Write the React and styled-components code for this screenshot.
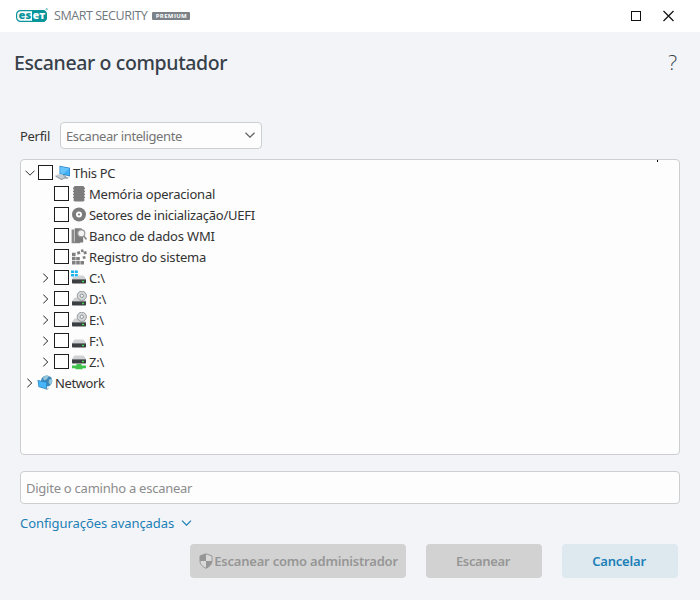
import React from "react";
import styled, { createGlobalStyle } from "styled-components";

const GlobalStyle = createGlobalStyle`
  * {
    box-sizing: border-box;
  }
  body {
    margin: 0;
    font-family: "Noto Sans", "Open Sans", sans-serif;
    font-size: 13px;
    color: #333;
  }
`;

const Window = styled.div`
  width: 700px;
  height: 600px;
  background: #f3f4f7;
  overflow: hidden;
`;

const TitleBar = styled.header`
  display: flex;
  align-items: center;
  height: 32px;
  padding: 0 25px 0 15px;
  background: #fff;
`;

const ProductName = styled.span`
  margin-left: 6px;
  font-family: "Open Sans", sans-serif;
  font-size: 12.5px;
  line-height: 32px;
  letter-spacing: -0.45px;
  color: #70787e;
  white-space: nowrap;
`;

const Badge = styled.span`
  width: 38px;
  height: 8px;
  margin-left: 5px;
  background: #7b8389;
  border-radius: 1px;
  color: #fff;
  font-family: "Open Sans", sans-serif;
  font-size: 6px;
  font-weight: 700;
  line-height: 8px;
  letter-spacing: 0.35px;
  text-align: center;
`;

const WindowControls = styled.div`
  display: flex;
  align-items: center;
  gap: 21px;
  margin-left: auto;
`;

const Heading = styled.div`
  display: flex;
  justify-content: space-between;
  align-items: center;
  height: 62px;
  padding: 0 23px 0 14px;
`;

const Title = styled.h1`
  margin: 0;
  font-size: 19.5px;
  font-weight: 500;
  line-height: 28px;
  letter-spacing: -0.38px;
  color: #37404a;
`;

const HelpButton = styled.span`
  font-family: "Open Sans", sans-serif;
  font-size: 21px;
  font-weight: 300;
  line-height: 26px;
  padding-bottom: 2px;
  color: #37404a;
`;

const Content = styled.main`
  display: flex;
  flex-direction: column;
  padding: 28px 20px 0;
`;

const ProfileRow = styled.div`
  display: flex;
  align-items: center;
  height: 27px;
`;

const Text = styled.span`
  letter-spacing: ${(props) => props.$spacing || 0}px;
  white-space: pre;
`;

const ProfileLabel = styled.label`
  width: 40px;
`;

const Select = styled.div`
  display: flex;
  align-items: center;
  justify-content: space-between;
  width: 202px;
  height: 27px;
  padding: 0 6px 0 5px;
  border: 1px solid #ccced0;
  border-radius: 4px;
  background: #fdfdfd;
  color: #747474;

  svg {
    margin-bottom: 2px;
  }
`;

const Tree = styled.div`
  height: 296px;
  margin-top: 10px;
  padding: 2px 4px;
  border: 1px solid #ccced0;
  border-radius: 4px;
  background: #fdfdfd;
  position: relative;
`;

/* text cursor tick on the top edge */
const Caret = styled.i`
  position: absolute;
  top: 0;
  right: 21px;
  width: 1px;
  height: 2px;
  background: #000;
`;

const TreeRow = styled.div`
  display: flex;
  align-items: center;
  height: 21px;
  padding-left: ${(props) => props.$level * 16}px;
`;

const Expander = styled.span`
  display: flex;
  align-items: center;
  width: 13px;
  height: 21px;
  padding-left: ${(props) => (props.$state === "closed" ? 2 : 0)}px;
`;

const Checkbox = styled.span`
  width: 15px;
  height: 15px;
  margin-right: 3px;
  border: 1px solid #1e1e1e;
  background: #fff;
`;

const IconBox = styled.span`
  display: flex;
  width: 16px;
  height: 16px;
  margin-left: -1px;
  margin-right: 2px;
`;

const RowLabel = styled(Text)`
  line-height: 21px;
  margin-top: 1px;
`;

const PathInput = styled.div`
  display: flex;
  align-items: center;
  height: 33px;
  margin-top: 16px;
  padding: 1px 5px 0;
  border: 1px solid #ccced0;
  border-radius: 4px;
  background: #fdfdfd;
  color: #8c8c8c;
`;

const AdvancedLink = styled.a`
  display: flex;
  align-items: center;
  gap: 7px;
  height: 20px;
  margin-top: 9px;
  color: #1c7fb6;
`;

const Actions = styled.footer`
  display: flex;
  justify-content: flex-end;
  gap: 20px;
  margin-top: 11px;
  padding-right: 2px;
`;

const Button = styled.button`
  display: flex;
  align-items: center;
  justify-content: center;
  gap: 1px;
  width: ${(props) => props.$width}px;
  height: 34px;
  padding: ${(props) => (props.$withIcon ? "0 0 0 1px" : "0 2px 0 0")};
  border: 0;
  border-radius: 4px;
  background: ${(props) => (props.$primary ? "#dde9ef" : "#d2d2d2")};
  color: ${(props) => (props.$primary ? "#1c7fb6" : "#969696")};
  font-family: inherit;
  font-size: 13px;
  font-weight: 600;
`;

const EsetLogo = () => (
  <svg width="33" height="16" viewBox="0 0 33 16">
    <rect x="1.6" y="2.6" width="29.8" height="10.8" rx="4" fill="#fff" stroke="#0a949c" strokeWidth="1.2" />
    <path d="M17 2h10.5a4.5 4.5 0 0 1 4.5 4.5v3a4.5 4.5 0 0 1-4.5 4.5H17z" fill="#0a949c" />
    <g fontFamily="Open Sans, sans-serif" fontSize="10.5" fontWeight="800">
      <text x="3.6" y="11.4" textLength="12.6" lengthAdjust="spacingAndGlyphs" fill="#0a949c">es</text>
      <text x="17.7" y="11.4" textLength="6.4" lengthAdjust="spacingAndGlyphs" fill="#fff">e</text>
      <text x="24.2" y="11.4" fontSize="9" textLength="6" lengthAdjust="spacingAndGlyphs" fill="#fff">T</text>
    </g>
    <circle cx="31.7" cy="1.2" r="0.8" fill="none" stroke="#0a949c" strokeWidth="0.5" />
  </svg>
);

const ChevronDown = ({ width = 10, color = "#333", weight = 1 }) => (
  <svg width={width} height="6" viewBox="0 0 10 6" fill="none" stroke={color} strokeWidth={weight}>
    <path d="M0.5 0.7L5 5.2L9.5 0.7" />
  </svg>
);

const ChevronRight = () => (
  <svg width="6" height="10" viewBox="0 0 6 10" fill="none" stroke="#222">
    <path d="M0.2 0.5L4.7 5L0.2 9.5" />
  </svg>
);

const Disk = ({ y = 0 }) => (
  <g transform={`translate(0 ${y})`}>
    <path d="M3.5 5.500h9L15 9H1z" fill="#cfd1d2" />
    <rect x="1" y="9" width="14" height="4.5" rx="0.7" fill="#3c3f41" />
    <path d="M1 9h14v1H1z" fill="#76797b" />
    <rect x="11" y="10.8" width="2" height="1.4" fill="#3fe04a" />
  </g>
);

const Disc = () => (
  <g>
    <circle cx="10.8" cy="4.8" r="4.6" fill="#d5d8da" stroke="#8d9295" strokeWidth="0.9" />
    <circle cx="10.8" cy="4.8" r="1.7" fill="#f5f5f5" stroke="#858a8d" strokeWidth="0.9" />
  </g>
);

const icons = {
  pc: (
    <>
      <path d="M4.5.8l10.5 2v8.7L4.5 9z" fill="#2b87c8" />
      <path d="M5.3 1.7l9 1.8v6.9L5.3 8.2z" fill="#41b0f7" />
      <path d="M5.3 1.7l9 1.8-6.2 5.4-2.8-.7z" fill="#68c3fb" />
      <path d="M8 9.8l3 .8v1.2l3 1-2 1.2-5-1.5z" fill="#9ca6ad" />
      <path d="M.5 10.5l4-1.5 6 3.2-4 2z" fill="#c3ccd2" />
      <path d="M.5 10.5l6 3.5 4-1.8v.8l-4 2-6-3.6z" fill="#7e8b94" />
    </>
  ),
  memory: (
    <g fill="#7c7c7c">
      <rect x="3" y="0" width="10" height="15.5" rx="1" />
      <path d="M2 1.5h12v1.8H2zM2 4.5h12v1.8H2zM2 7.5h12v1.8H2zM2 10.5h12v1.8H2zM2.5 13.3h11v1.5h-11z" />
    </g>
  ),
  boot: (
    <>
      <circle cx="8" cy="7.5" r="7" fill="#7c7c7c" />
      <circle cx="8" cy="7.5" r="3" fill="#fff" />
      <circle cx="8" cy="7.5" r="1.1" fill="#7c7c7c" />
    </>
  ),
  wmi: (
    <>
      <path d="M.6 1.5h2.6v12h6v1.7H.6z" fill="#8b8b8b" />
      <path d="M3.7.3h6.500l2 2v12.300H3.700z" fill="#7c7c7c" />
      <circle cx="10.3" cy="5.3" r="3.5" fill="#f4f4f4" stroke="#999" strokeWidth="1.2" />
      <path d="M12.7 8l2.800 3.3" stroke="#909090" strokeWidth="1.8" />
    </>
  ),
  registry: (
    <g fill="#808080">
      <path d="M1 3.800h3.600v3.400H1zM1 7.900h3.600v3.400H1zM1 12h3.600v3.400H1zM5.200 12h3.600v3.400H5.200zM9.400 12H13v3.400H9.400zM5.200 7.900h3.600v3.400H5.200z" />
      <path d="M5.800 3l2.800-.9.9 2.700-2.800.9zM9.800.8l2.400-.5.5 2.400-2.400.5zM12.300 2.800l2.900-.7.7 2.700-2.900.7zM11.500 7.600l2.700-.5.500 2.500-2.700.5z" />
    </g>
  ),
  system: (
    <>
      <path d="M7 5.500h5.500L15 9H1l1-2h5z" fill="#cfd1d2" />
      <path d="M0 .5h3v2.6H0zM3.8.5h3v2.6h-3zM0 4h3v2.6H0zM3.8 4h3v2.6h-3z" fill="#19b1ee" />
      <rect x="1" y="9" width="14" height="4.5" rx="0.7" fill="#3c3f41" />
      <path d="M1 9h14v1H1z" fill="#76797b" />
      <rect x="11" y="10.8" width="2" height="1.4" fill="#3fe04a" />
    </>
  ),
  optical: (
    <>
      <Disk y={1} />
      <Disc />
    </>
  ),
  disk: <Disk y={1} />,
  mapped: (
    <>
      <Disk y={-4} />
      <path d="M5.5 10h5v1.5H15v2.7h-3.5v1h-7v-1H1v-2.7h4.5z" fill="#3fc34a" />
    </>
  ),
  network: (
    <>
      <circle cx="9.7" cy="6" r="5.6" fill="#3d86b8" />
      <path d="M6 2.700c2-2.500 5-2.500 6-1.500L9.500 4.500 7 5.500zM12 4.500l3-.5c.6 3-.5 5-1.300 6l-2-2z" fill="#94c7dc" />
      <path d="M.5 5l9.500 2v7.500L1.500 12z" fill="#2480c2" />
      <path d="M1.200 5.900l8.100 1.700v5.800L2 11.400z" fill="#48b5f6" />
      <path d="M9 13.500l3-.5-1.500 1.800-3.500-.8z" fill="#9aabb5" />
    </>
  ),
};

const rows = [
  { label: "This PC", icon: "pc", level: 0, state: "open", check: true, spacing: -0.3 },
  { label: "Memória operacional", icon: "memory", level: 1, check: true, spacing: -0.22 },
  { label: "Setores de inicialização/UEFI", icon: "boot", level: 1, check: true, spacing: -0.27 },
  { label: "Banco de dados WMI", icon: "wmi", level: 1, check: true, spacing: -0.18 },
  { label: "Registro do sistema", icon: "registry", level: 1, check: true, spacing: -0.18 },
  { label: "C:\\", icon: "system", level: 1, state: "closed", check: true, spacing: -0.2 },
  { label: "D:\\", icon: "optical", level: 1, state: "closed", check: true, spacing: -0.2 },
  { label: "E:\\", icon: "optical", level: 1, state: "closed", check: true, spacing: -0.2 },
  { label: "F:\\", icon: "disk", level: 1, state: "closed", check: true, spacing: -0.2 },
  { label: "Z:\\", icon: "mapped", level: 1, state: "closed", check: true, spacing: -0.2 },
  { label: "Network", icon: "network", level: 0, state: "closed", spacing: -0.38 },
];

const Shield = () => (
  <svg width="14" height="16" viewBox="0 0 14 16">
    <path d="M7 .8l6 2.2v5c0 3.5-3 6-6 7.3C4 14 1 11.5 1 8V3z" fill="#d9d9d9" stroke="#969696" />
    <path d="M7 .8V8H1V3zM7 8h6c0 3.5-3 6-6 7.3z" fill="#969696" />
  </svg>
);

const TreeItem = ({ label, icon, level, state, check, spacing }) => (
  <TreeRow $level={level}>
    <Expander $state={state}>
      {state === "open" && <ChevronDown />}
      {state === "closed" && <ChevronRight />}
    </Expander>
    {check && <Checkbox />}
    <IconBox>
      <svg width="16" height="16" viewBox="0 0 16 16">
        {icons[icon]}
      </svg>
    </IconBox>
    <RowLabel $spacing={spacing}>{label}</RowLabel>
  </TreeRow>
);

export const App = () => {
  return (
    <Window>
      <GlobalStyle />
      <TitleBar>
        <EsetLogo />
        <ProductName>SMART SECURITY</ProductName>
        <Badge>PREMIUM</Badge>
        <WindowControls>
          <svg width="11" height="11" viewBox="0 0 11 11" fill="none" stroke="#111">
            <rect x="0.5" y="0.5" width="9" height="9" />
          </svg>
          <svg width="12" height="12" viewBox="0 0 12 12" stroke="#111" strokeWidth="1.2">
            <path d="M0.5 1l10 10M10.5 1l-10 10" />
          </svg>
        </WindowControls>
      </TitleBar>
      <Heading>
        <Title>Escanear o computador</Title>
        <HelpButton>?</HelpButton>
      </Heading>
      <Content>
        <ProfileRow>
          <ProfileLabel>
            <Text $spacing={-0.3}>Perfil</Text>
          </ProfileLabel>
          <Select>
            <Text $spacing={-0.4}>Escanear inteligente</Text>
            <ChevronDown color="#666" weight={1.3} />
          </Select>
        </ProfileRow>
        <Tree>
          <Caret />
          {rows.map((row) => (
            <TreeItem key={row.label} {...row} />
          ))}
        </Tree>
        <PathInput>
          <Text $spacing={-0.25}>Digite o caminho a escanear</Text>
        </PathInput>
        <AdvancedLink>
          <Text $spacing={-0.07}>Configurações avançadas</Text>
          <ChevronDown width={11} color="#1c7fb6" weight={1.2} />
        </AdvancedLink>
        <Actions>
          <Button $width={216} $withIcon>
            <Shield />
            <Text $spacing={-0.2}>Escanear como administrador</Text>
          </Button>
          <Button $width={116}>
            <Text $spacing={-0.35}>Escanear</Text>
          </Button>
          <Button $width={116} $primary>
            <Text $spacing={-0.2}>Cancelar</Text>
          </Button>
        </Actions>
      </Content>
    </Window>
  );
};

export default App;
